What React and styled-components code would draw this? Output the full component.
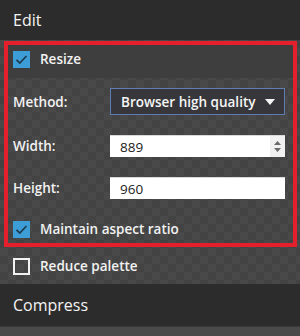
import styled, { createGlobalStyle } from "styled-components";

const GlobalStyle = createGlobalStyle`
  html, body {
    margin: 0;
    padding: 0;
    background: #444444;
  }
  * { box-sizing: border-box; }
`;

const checker = `
  background-color: #464646;
  background-image: repeating-conic-gradient(#494949 0 25%, #434343 0 50%);
  background-size: 16px 16px;
`;

const Page = styled.div`
  width: 300px;
  height: 336px;
  overflow: hidden;
  display: flex;
  flex-direction: column;
  font-family: "Open Sans", "Noto Sans", sans-serif;
  color: #f2f2f2;
  ${checker}
`;

const SectionHeader = styled.div`
  height: ${(p) => p.$h}px;
  flex-shrink: 0;
  display: flex;
  align-items: center;
  padding-left: 13px;
  background: #2c2c2c;
  font-size: 16px;
  font-weight: 400;
  color: #f4f4f4;
`;

const Highlight = styled.div`
  margin: 1px 3px 0 4px;
  border: 4px solid #e3202b;
  display: flex;
  flex-direction: column;
`;

const CheckRow = styled.label`
  height: ${(p) => p.$h}px;
  display: flex;
  align-items: flex-start;
  gap: 10px;
  padding: ${(p) => p.$top}px 0 0 ${(p) => p.$left}px;
  background: ${(p) => (p.$plain ? "#3e3e3e" : "transparent")};
  font-size: 13.5px;
  font-weight: 600;
  line-height: 17px;
  flex-shrink: 0;
`;

const Box = styled.span`
  width: 17px;
  height: 17px;
  flex-shrink: 0;
  display: flex;
  align-items: center;
  justify-content: center;
  background: ${(p) => (p.$on ? "#3c9dd7" : "transparent")};
  border: ${(p) => (p.$on ? "none" : "2px solid #f2f2f2")};
`;

const Fields = styled.div`
  display: flex;
  flex-direction: column;
  padding: 10px 8px 0 5px;
`;

const FieldRow = styled.div`
  display: grid;
  grid-template-columns: 97px 175px;
  align-items: center;
  margin-bottom: ${(p) => p.$mb}px;
`;

const Label = styled.span`
  font-size: 13.5px;
  font-weight: 600;
`;

const Select = styled.div`
  height: 27px;
  display: flex;
  align-items: center;
  justify-content: space-between;
  padding: 0 9px 0 10px;
  background: #37373b;
  border: 1px solid #5f7db3;
  font-size: 13.5px;
  font-weight: 600;
  color: #f5f5f5;
`;

const Input = styled.div`
  height: 22px;
  display: flex;
  align-items: center;
  justify-content: space-between;
  padding: 0 0 0 10px;
  background: #ffffff;
  border-top: 1px solid #d9d9d9;
  font-size: 13.5px;
  color: #222222;
`;

const Spin = styled.div`
  width: 15px;
  height: 100%;
  display: flex;
  align-items: center;
  justify-content: center;
  background: #f1f1f1;
`;

const Check = () => (
  <svg width="13" height="13" viewBox="0 0 13 13">
    <path d="M1.5 6.8 L4.8 10 L11.5 3" fill="none" stroke="#1f3a4e" strokeWidth="1.7" />
  </svg>
);

const Footer = styled.div`
  flex: 1;
  border-top: 1px solid #3a3a3a;
  background: #4a4a4a;
`;

export default function App() {
  return (
    <>
      <GlobalStyle />
      <Page>
        <SectionHeader $h={40}>Edit</SectionHeader>
        <Highlight>
          <CheckRow $h={33} $top={6} $left={5} $plain>
            <Box $on><Check /></Box>
            Resize
          </CheckRow>
          <Fields>
            <FieldRow $mb={20}>
              <Label>Method:</Label>
              <Select>
                Browser high quality
                <svg width="10" height="6" viewBox="0 0 10 6">
                  <path d="M0 0 H10 L5 6 Z" fill="#f5f5f5" />
                </svg>
              </Select>
            </FieldRow>
            <FieldRow $mb={20}>
              <Label>Width:</Label>
              <Input>
                889
                <Spin>
                  <svg width="9" height="13" viewBox="0 0 9 13">
                    <path d="M4.5 1 L8 5 H1 Z M1 8 H8 L4.5 12 Z" fill="#6a6a6a" />
                  </svg>
                </Spin>
              </Input>
            </FieldRow>
            <FieldRow $mb={0}>
              <Label>Height:</Label>
              <Input>960</Input>
            </FieldRow>
          </Fields>
          <CheckRow $h={44} $top={22} $left={5}>
            <Box $on><Check /></Box>
            Maintain aspect ratio
          </CheckRow>
        </Highlight>
        <CheckRow $h={37} $top={11} $left={13}>
          <Box />
          Reduce palette
        </CheckRow>
        <SectionHeader $h={42}>Compress</SectionHeader>
        <Footer />
      </Page>
    </>
  );
}
